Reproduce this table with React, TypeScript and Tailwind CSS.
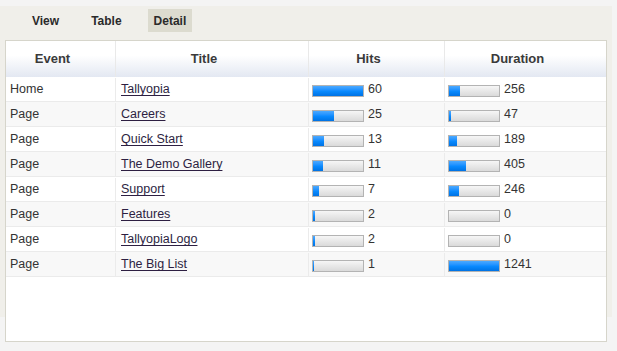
import React from "react";

type Row = { event: string; title: string; hits: number; duration: number };

const rows: Row[] = [
  { event: "Home", title: "Tallyopia", hits: 60, duration: 256 },
  { event: "Page", title: "Careers", hits: 25, duration: 47 },
  { event: "Page", title: "Quick Start", hits: 13, duration: 189 },
  { event: "Page", title: "The Demo Gallery", hits: 11, duration: 405 },
  { event: "Page", title: "Support", hits: 7, duration: 246 },
  { event: "Page", title: "Features", hits: 2, duration: 0 },
  { event: "Page", title: "TallyopiaLogo", hits: 2, duration: 0 },
  { event: "Page", title: "The Big List", hits: 1, duration: 1241 },
];

const maxHits = Math.max(...rows.map((r) => r.hits));
const maxDuration = Math.max(...rows.map((r) => r.duration));

function Bar({ value, max }: { value: number; max: number }) {
  const w = value > 0 ? Math.ceil((value / max) * 50) : 0;
  return (
    <div className="mt-[3px] flex h-[12px] w-[52px] shrink-0 border border-[#b3b3b3] bg-linear-to-b from-[#f6f6f6] to-[#dadada]">
      <div
        className="h-full bg-linear-to-b from-[#4aa9ff] via-[#0a8bff] to-[#0072e4]"
        style={{ width: w }}
      />
    </div>
  );
}

const tabs = ["View", "Table", "Detail"];

export default function App() {
  return (
    <div
      className="h-[351px] w-[617px] bg-[#f4f4f4] pt-[6px] text-[#333]"
      style={{ fontFamily: '"Liberation Sans", Arial, sans-serif' }}
    >
      <div className="h-[311px] w-[612px] bg-[#f0efea]">
        <div className="flex h-[34px] items-start gap-[20px] pl-[26px] pt-[3px]">
          {tabs.map((t) => (
            <div
              key={t}
              className={`flex h-[23px] items-center px-[6px] text-[12px] font-bold text-[#2a2a2a] ${
                t === "Detail" ? "bg-[#dcdbcf]" : ""
              }`}
            >
              {t}
            </div>
          ))}
        </div>
        <div className="ml-[5px] h-[302px] w-[602px] border border-[#d6d5cb] bg-white">
          <div className="grid h-[36px] grid-cols-[110px_193px_136px_161px] bg-linear-to-b from-white from-40% to-[#e3e8f2] text-[13px] font-bold text-[#3a3a3a]">
            {["Event", "Title", "Hits", "Duration"].map((h, i) => (
              <div
                key={h}
                className={`flex items-center justify-center pr-[16px] ${
                  i < 3 ? "border-r border-[#e9e9e9]" : ""
                }`}
              >
                {h}
              </div>
            ))}
          </div>
          {rows.map((r, i) => (
            <div
              key={i}
              className={`grid h-[25px] grid-cols-[110px_193px_136px_161px] border-b border-[#ebebeb] pt-[1px] text-[12.5px] ${
                i % 2 === 1 ? "bg-[#f8f8f8]" : "bg-white"
              }`}
            >
              <div className="flex items-center border-r border-[#ebebeb] pl-[4px]">
                {r.event}
              </div>
              <div className="flex items-center border-r border-[#ebebeb] pl-[5px]">
                <a href="#" className="text-[#2d1f42] underline underline-offset-[2px]">
                  {r.title}
                </a>
              </div>
              <div className="flex items-center gap-[4px] border-r border-[#ebebeb] pl-[3px]">
                <Bar value={r.hits} max={maxHits} />
                <span>{r.hits}</span>
              </div>
              <div className="flex items-center gap-[4px] pl-[3px]">
                <Bar value={r.duration} max={maxDuration} />
                <span>{r.duration}</span>
              </div>
            </div>
          ))}
        </div>
      </div>
    </div>
  );
}
